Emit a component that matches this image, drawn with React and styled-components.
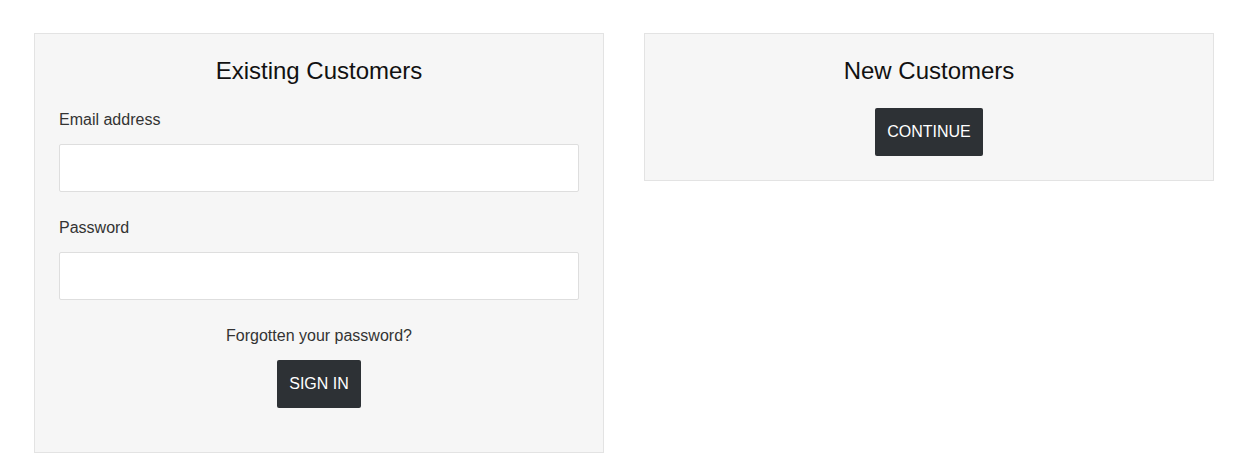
import React from 'react';
import styled, { createGlobalStyle } from 'styled-components';

const GlobalStyle = createGlobalStyle`
  html, body {
    margin: 0;
    padding: 0;
    background: #ffffff;
    font-family: "Liberation Sans", Arial, sans-serif;
  }
`;

const Page = styled.div`
  display: grid;
  grid-template-columns: 570px 570px;
  column-gap: 40px;
  align-items: start;
  padding: 33px 0 0 34px;
`;

const Panel = styled.section`
  background: #f6f6f6;
  border: 1px solid #e3e3e3;
  padding: 24px 24px ${({ $tall }) => ($tall ? '44px' : '24px')};
  display: flex;
  flex-direction: column;
`;

const Title = styled.h2`
  margin: 0 0 ${({ $gap }) => $gap}px;
  font-size: 24px;
  font-weight: 400;
  line-height: 26px;
  color: #111;
  text-align: center;
`;

const Label = styled.label`
  display: block;
  font-size: 16px;
  line-height: 18px;
  color: #333;
  margin-bottom: 15px;
`;

const Field = styled.div`
  display: flex;
  flex-direction: column;
  margin-bottom: 27px;
`;

const Input = styled.input`
  box-sizing: border-box;
  height: 48px;
  width: 100%;
  background: #fff;
  border: 1px solid #dedede;
  border-radius: 2px;
  padding: 0 12px;
  font-family: inherit;
  font-size: 16px;
  outline: none;
`;

const Link = styled.a`
  display: block;
  text-align: center;
  font-size: 16px;
  line-height: 18px;
  color: #333;
  text-decoration: none;
  margin-bottom: 15px;
`;

const Button = styled.button`
  align-self: center;
  height: 48px;
  padding: 0 12px;
  background: #2d3135;
  color: #fff;
  border: none;
  border-radius: 2px;
  font-family: inherit;
  font-size: 16px;
  text-transform: uppercase;
  cursor: pointer;
`;

export default function App() {
  return (
    <>
      <GlobalStyle />
      <Page>
        <Panel $tall>
          <Title $gap={27}>Existing Customers</Title>
          <Field>
            <Label htmlFor="email">Email address</Label>
            <Input id="email" type="email" />
          </Field>
          <Field>
            <Label htmlFor="password">Password</Label>
            <Input id="password" type="password" />
          </Field>
          <Link href="#">Forgotten your password?</Link>
          <Button>Sign in</Button>
        </Panel>
        <Panel>
          <Title $gap={24}>New Customers</Title>
          <Button>Continue</Button>
        </Panel>
      </Page>
    </>
  );
}
